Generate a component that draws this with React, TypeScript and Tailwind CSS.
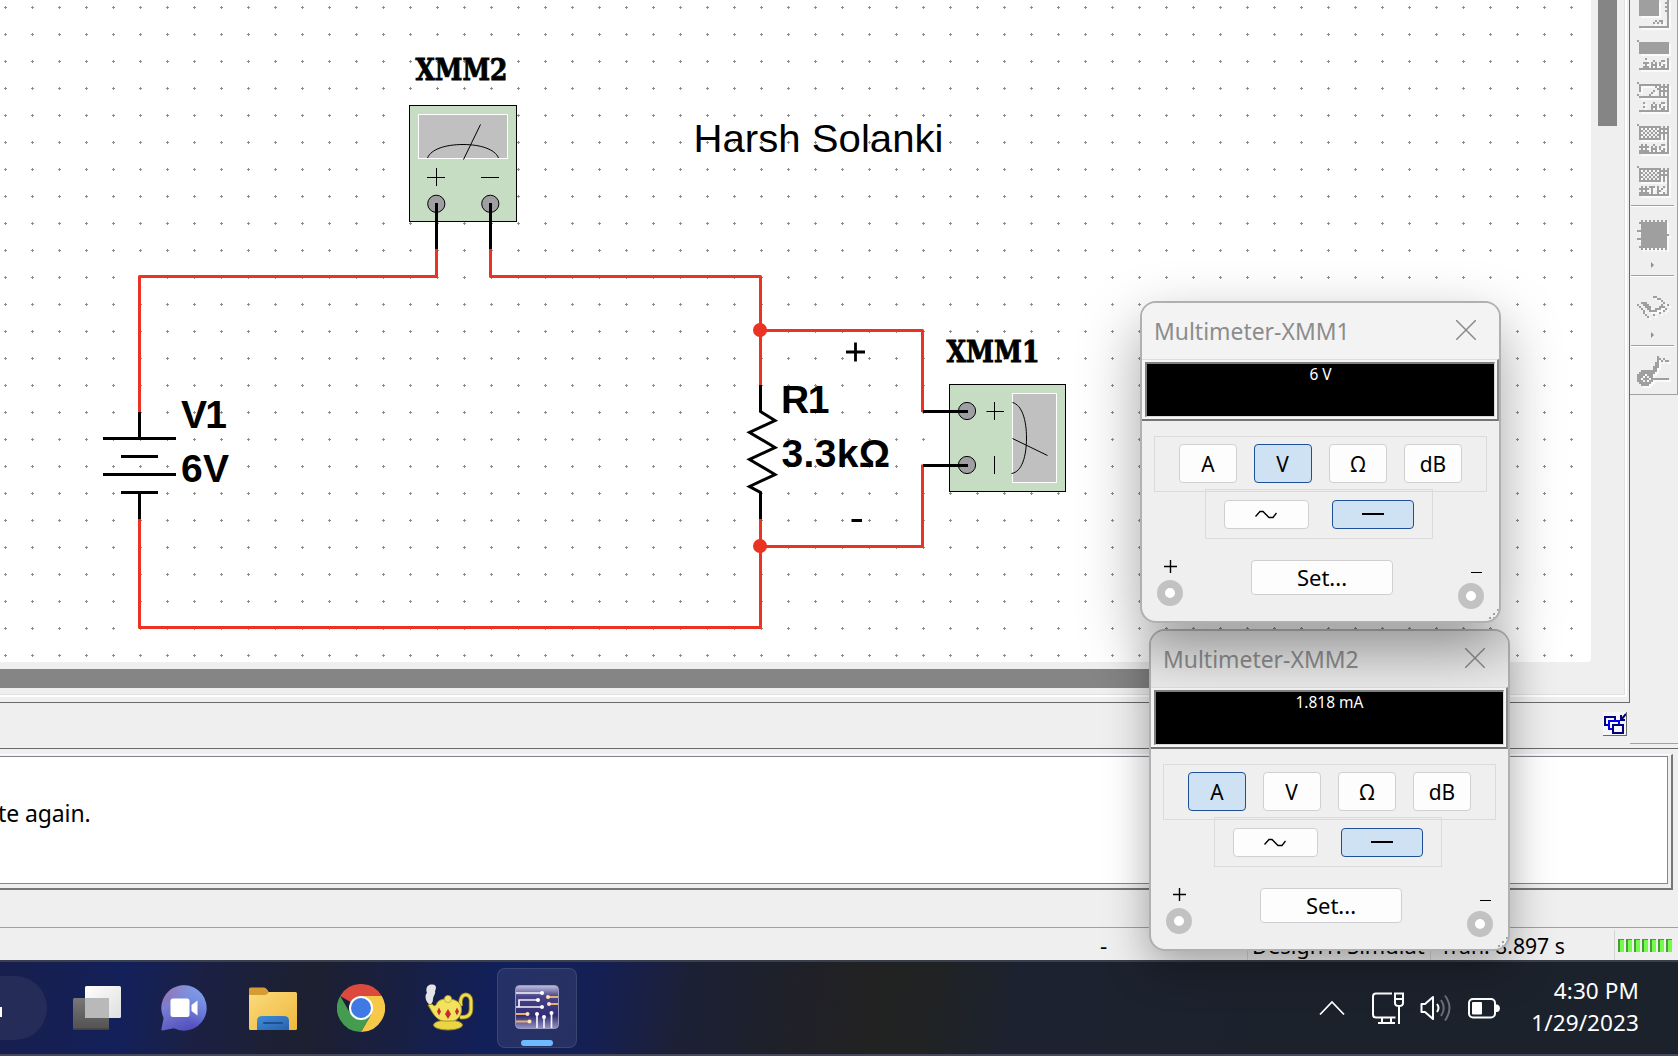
import React from "react";

const RED = "#ea3323";

/* ---------- Schematic ---------- */

function Schematic() {
  return (
    <svg width="1591" height="662" viewBox="0 0 1591 662" className="block rounded-br-sm bg-white">
      <defs>
        <pattern id="grid" x="4" y="6" width="27" height="27" patternUnits="userSpaceOnUse">
          <path d="M0 1h3v1H0zM1 0h1v3H1z" fill="#8f8f8f" shapeRendering="crispEdges" />
        </pattern>
      </defs>
      <rect width="1591" height="662" fill="url(#grid)" />

      <g fill="none" stroke={RED} strokeWidth="3" strokeLinejoin="round">
        <path d="M436.5 248V276.5H139.5V413" />
        <path d="M490.5 248V276.5H760.5V386" />
        <path d="M139.5 518V627.5H760.5V518" />
        <path d="M760.5 330.5H922.5V412" />
        <path d="M760.5 546.5H922.5V464.5" />
      </g>
      <circle cx="760" cy="330" r="7" fill={RED} />
      <circle cx="760" cy="546" r="7" fill={RED} />

      <g fill="none" stroke="#000" strokeWidth="3">
        <path d="M139.5 412V438M103 438.5H176M121 456.5H158M103 474.5H176M121 492.5H158M139.5 492V519" />
        <path d="M760.5 385V411.5L775 420.5L749.5 432.5L775 447.5L749.5 459.5L775 474.5L749.5 486.5L760.5 492.5V519" />
      </g>

      <g fill="none" stroke="#000">
        <rect x="409.5" y="105.5" width="107" height="116" fill="#c6dcc3" />
        <rect x="418.5" y="114.5" width="89" height="44" fill="#c0c0c0" stroke="#fff" />
        <path d="M427.5 158C431 149 446 144.5 463 144.5S495 149 498.5 158M480.5 124.5L463.5 159.5" />
        <path d="M427 177.5H445M436.5 168V186M481 177.5H499" />
        <circle cx="436.3" cy="203.8" r="8.6" fill="#9f9fa3" />
        <circle cx="490.3" cy="203.8" r="8.6" fill="#9f9fa3" />
        <path d="M436.5 203V249M490.5 203V249" strokeWidth="3" />
      </g>
      <g fill="none" stroke="#000">
        <rect x="949.5" y="384.5" width="116" height="107" fill="#c6dcc3" />
        <rect x="1012.5" y="393.5" width="44" height="89" fill="#c0c0c0" stroke="#fff" />
        <path d="M1012.5 402.5C1022 405 1026.5 420 1026.5 438S1022 472 1011.5 473.5M1012.5 438.5L1047.5 455.5" />
        <path d="M986.5 411.5H1004M994.5 402V420M994.5 456V474" />
        <circle cx="967" cy="411" r="8.6" fill="#9f9fa3" />
        <circle cx="967" cy="465" r="8.6" fill="#9f9fa3" />
        <path d="M923 411.5H968M923 465.5H968" strokeWidth="3" />
      </g>

      <g fontFamily="'DejaVu Serif', serif" fontWeight="700" fontSize="29" stroke="#000" strokeWidth="0.9">
        <text x="415.5" y="80" textLength="92" lengthAdjust="spacingAndGlyphs">XMM2</text>
        <text x="946.5" y="361.500" textLength="93" lengthAdjust="spacingAndGlyphs">XMM1</text>
      </g>
      <g fontFamily="'Liberation Sans', Arial, sans-serif" fontSize="39">
        <text x="693.5" y="152" textLength="250" lengthAdjust="spacingAndGlyphs">Harsh Solanki</text>
        <g fontWeight="700">
          <text x="181" y="428" textLength="46">V1</text>
          <text x="181" y="482" textLength="48">6V</text>
          <text x="781" y="413" textLength="48.5">R1</text>
          <text x="781.500" y="467" textLength="108.500">3.3kΩ</text>
        </g>
      </g>
      <path d="M846 352H865M855.5 342.5V361.5M851.5 520.5H862" stroke="#000" strokeWidth="2.8" />
    </svg>
  );
}

/* ---------- Instrument toolbar ---------- */

const FULL = ".###############";
const ICON_TOP = [
  "................",
  ".##########....#",
  ".##########...##",
  ".##########....#",
  ".##########...##",
  ".##########....#",
  ".##########...##",
  ".##########....#",
  ".##########....#",
  "...............#",
  "...............#",
  ".........#.##..#",
  "........#.#.#..#",
  "...............#",
  FULL,
];
const ICON_AG = [
  "#...............",
  FULL,
  FULL,
  FULL,
  FULL,
  FULL,
  FULL,
  "................",
  "................",
  "....#..........#",
  "........#...##.#",
  "...###.#.#.#...#",
  "....#..###.#.#.#",
  "...###.#.#..##.#",
  FULL,
];
const ICON_BODE = [
  "#...............",
  ".###########.#.#",
  ".#.......#.#####",
  ".#........##.#.#",
  ".#......#..#####",
  ".......#...#.#.#",
  "#.....#....#.#.#",
  ".###############",
  "...............#",
  "...............#",
  "...#....#...##.#",
  ".......#.#.#...#",
  "...#...###.#.#.#",
  ".......#.#..##.#",
  FULL,
];
const ICON_HASH = [
  "#...............",
  ".###########.#.#",
  ".#.#.#.#.#.#####",
  ".##.#.#.#.##.#.#",
  ".#.#.#.#.#.#####",
  ".##.#.#.#.##.#.#",
  ".#.#.#.#.#.#.#.#",
  ".###########.#.#",
  "...............#",
  "...............#",
  "..#.#...#...##.#",
  ".#####.#.#.#...#",
  "..#.#..###.#.#.#",
  ".#####.#.#..##.#",
  FULL,
];
const ICON_TK = [
  ...ICON_HASH.slice(0, 9),
  "...............#",
  "..#.#.###.#..#.#",
  ".#####.#..#.#..#",
  "..#.#..#..##...#",
  ".#####.#..#..#.#",
  FULL,
];
const CHIP_ROW = "..#############.";
const ICON_CHIP = [
  "..#.#.#.#.#.#.#.",
  ".##############.",
  CHIP_ROW, CHIP_ROW, CHIP_ROW,
  "###############.",
  CHIP_ROW,
  "..##############",
  CHIP_ROW,
  "###############.",
  CHIP_ROW, CHIP_ROW, CHIP_ROW,
  ".##############.",
  "..#.#.#.#.#.#.#.",
];
const ICON_HAND = [
  "........##......",
  "..........##....",
  "............#...",
  "..###........#..",
  "#..###......#..#",
  ".#..###....###..",
  "..#..##..###..#.",
  "...#..####...#..",
  "...#.......#....",
  "....#...#.......",
  ".....#..........",
];
const ICON_PROBE = [
  "..........#.....",
  "..........##.#..",
  "..........#.#.##",
  ".........##.....",
  ".........##.....",
  "........###.....",
  "........##......",
  "..########......",
  ".########.......",
  "####.###........",
  "###.#.##........",
  "##.###.#########",
  "###.#.##........",
  ".######.........",
  "..####..........",
];

function PixelIcon({ rows }: { rows: string[] }) {
  const cells: string[] = [];
  rows.forEach((r, y) =>
    r.split("").forEach((c, x) => {
      if (c === "#") cells.push(`M${x * 2} ${y * 2}h2v2h-2z`);
    })
  );
  const d = cells.join("");
  return (
    <svg width="34" height={rows.length * 2 + 2} className="block shrink-0" shapeRendering="crispEdges">
      <path d={d} fill="#fff" fillOpacity="0.7" transform="translate(2 2)" />
      <path d={d} fill="#9f9f9f" />
    </svg>
  );
}

function Separator() {
  return <div className="ml-px h-0.5 w-[43px] shrink-0 border-t border-[#a0a0a0] bg-white" />;
}

function Arrow() {
  return (
    <svg width="4" height="6" className="ml-[21px] block shrink-0">
      <path d="M0 0L3 3L0 6z" fill="#8f8f8f" />
    </svg>
  );
}

function Toolbar() {
  return (
    <div className="flex h-[744px] w-12 shrink-0 flex-col border-b border-[#a0a0a0]">
      <div className="flex h-[395px] flex-col overflow-hidden border-r border-b border-[#a0a0a0]">
        <div className="-mt-0.5 ml-[7px] flex flex-col gap-2.5">
          <PixelIcon rows={ICON_TOP} />
          <PixelIcon rows={ICON_AG} />
          <PixelIcon rows={ICON_BODE} />
          <PixelIcon rows={ICON_HASH} />
          <PixelIcon rows={ICON_TK} />
        </div>
        <div className="h-[7px] shrink-0" />
        <Separator />
        <div className="ml-[7px] pt-[13px]">
          <PixelIcon rows={ICON_CHIP} />
        </div>
        <div className="h-[10px] shrink-0" />
        <Arrow />
        <div className="h-[7px] shrink-0" />
        <Separator />
        <div className="ml-[7px] pt-[19px]">
          <PixelIcon rows={ICON_HAND} />
        </div>
        <div className="h-[12px] shrink-0" />
        <Arrow />
        <div className="h-[7px] shrink-0" />
        <Separator />
        <div className="ml-[7px] pt-[9px]">
          <PixelIcon rows={ICON_PROBE} />
        </div>
      </div>
    </div>
  );
}

/* ---------- Multimeter windows ---------- */

function MeterButton({ label, active }: { label: string; active: boolean }) {
  return (
    <button
      className={
        "flex h-[39px] w-[58px] items-center justify-center rounded border pb-0.5 text-[22px] leading-none text-black " +
        (active ? "border-[#1f4f95] bg-[#cfe2f4]" : "border-[#d0d0d0] bg-[#fdfdfd]")
      }
    >
      <span className="inline-block scale-x-95">{label}</span>
    </button>
  );
}

function Jack() {
  return <div className="size-[26px] rounded-full border-8 border-[#c2c2c2] bg-white" />;
}

type MeterProps = { title: string; value: string; mode: string; className: string; titleClass: string };

function Multimeter({ title, value, mode, className, titleClass }: MeterProps) {
  return (
    <div
      className={
        "absolute flex h-[322px] w-[361px] flex-col overflow-hidden rounded-2xl border-2 border-[#b0b0b0] bg-[#efefef] " +
        className
      }
    >
      <div className={"flex h-14 shrink-0 items-center justify-between pr-[23px] pl-3 " + titleClass}>
        <span className="inline-block origin-left scale-x-[0.955] text-[24px] leading-none whitespace-nowrap text-[#8c8c8c]">
          {title}
        </span>
        <svg width="20" height="20" className="block -translate-y-px">
          <path d="M0 0L20 20M20 0L0 20" stroke="#8a8a8a" strokeWidth="1.5" />
        </svg>
      </div>
      <div className="flex h-[62px] shrink-0 border-t border-r-2 border-b-2 border-t-[#dedede] border-r-[#8a8a8a] border-b-[#757575] bg-[#f6f6f6] pt-0.5 pr-0.5 pb-[2px] pl-[3px]">
        <div className="flex grow justify-center border-2 border-r border-b border-t-[#808080] border-r-[#d8d8d8] border-b-[#d8d8d8] border-l-[#808080] bg-black pt-[2px] text-[15.5px] leading-4 text-white">
          {value}
        </div>
      </div>
      <div className="ml-3 mt-[15px] flex h-14 w-[333px] shrink-0 items-start gap-[17px] border border-[#dbdbdb] pt-[7px] pl-6">
        {["A", "V", "Ω", "dB"].map((m) => (
          <MeterButton key={m} label={m} active={m === mode} />
        ))}
      </div>
      <div className="-mt-[3px] ml-[63px] flex h-[50px] w-[228px] shrink-0 items-start gap-[23px] border border-[#dbdbdb] pt-2.5 pl-[18px]">
        <button className="flex h-[29px] w-[85px] items-center justify-center rounded border border-[#d0d0d0] bg-[#fdfdfd]">
          <svg width="22" height="10" className="-translate-x-px">
            <path d="M0.5 6.5L5 1.5H8L14 7.5H18L21.5 3" fill="none" stroke="#000" strokeWidth="1.4" />
          </svg>
        </button>
        <button className="flex h-[29px] w-[82px] items-center justify-center rounded border border-[#1f4f95] bg-[#cfe2f4]">
          <span className="h-0.5 w-[22px] -translate-y-px bg-black" />
        </button>
      </div>
      <div className="flex grow items-start pt-[21px] pr-[15px] pl-[15px]">
        <div className="flex w-[26px] flex-col items-center">
          <svg width="13" height="13" className="ml-px">
            <path d="M0 6.5H13M6.5 0V13" stroke="#000" strokeWidth="1.4" />
          </svg>
          <div className="mt-[7px]">
            <Jack />
          </div>
        </div>
        <button className="ml-[68px] flex h-[35px] w-[142px] items-center justify-center rounded border border-[#cfcfcf] bg-[#fdfdfd] pb-0.5 text-[22px] leading-none text-black">
          Set...
        </button>
        <div className="ml-auto flex w-[26px] flex-col items-end pt-3">
          <div className="mr-0.5 h-px w-[11px] bg-black" />
          <div className="mt-2.5">
            <Jack />
          </div>
        </div>
      </div>
      <svg width="10" height="10" className="absolute right-0 bottom-0.5">
        <path d="M8 0h2v2H8zM8 4h2v2H8zM4 4h2v2H4zM8 8h1v2H8zM4 8h2v2H4zM0 8h2v2H0z" fill="#a0a0a0" />
      </svg>
    </div>
  );
}

/* ---------- Taskbar ---------- */

function TaskViewIcon() {
  return (
    <svg width="48" height="44" className="block">
      <defs>
        <linearGradient id="tvw" x1="0" y1="0" x2="1" y2="1">
          <stop offset="0" stopColor="#fff" />
          <stop offset="1" stopColor="#dedede" />
        </linearGradient>
        <linearGradient id="tvg" x1="0" y1="0" x2="0" y2="1">
          <stop offset="0" stopColor="#777" />
          <stop offset="1" stopColor="#515151" />
        </linearGradient>
      </defs>
      <rect x="0" y="12" width="36" height="32" rx="1.5" fill="url(#tvg)" />
      <rect x="12" y="0" width="36" height="32" rx="1.5" fill="url(#tvw)" />
      <rect x="12" y="12" width="24" height="20" fill="#b9b9b9" />
      <rect x="0" y="42.5" width="36" height="1.5" fill="#3f3f3f" />
    </svg>
  );
}

function ChatIcon() {
  const bubble = "M23 0.3a22.5 22.7 0 1 1-10 43L1.5 45.6Q0 45.6 0.4 44L2.6 33A22.5 22.7 0 0 1 23 .3z";
  return (
    <svg width="46" height="46" className="block">
      <defs>
        <linearGradient id="chat" x1="0.1" y1="0.1" x2="0.5" y2="1">
          <stop offset="0" stopColor="#9c6da8" />
          <stop offset="0.35" stopColor="#7b7fd0" />
          <stop offset="1" stopColor="#5450c0" />
        </linearGradient>
        <linearGradient id="chat2" x1="1" y1="0" x2="0.4" y2="0.6">
          <stop offset="0" stopColor="#7ba4f0" />
          <stop offset="1" stopColor="#7ba4f0" stopOpacity="0" />
        </linearGradient>
      </defs>
      <path d={bubble} fill="url(#chat)" />
      <path d={bubble} fill="url(#chat2)" />
      <rect x="9.500" y="13.500" width="19" height="18.500" rx="2.500" fill="#fff" />
      <path d="M30.500 20L36.500 15.500V30.500L30.500 26z" fill="#fff" />
    </svg>
  );
}

function FolderIcon() {
  return (
    <svg width="48" height="43" className="block">
      <defs>
        <linearGradient id="fold" x1="0" y1="0" x2="1" y2="1">
          <stop offset="0" stopColor="#fbdb7c" />
          <stop offset="1" stopColor="#eeb73d" />
        </linearGradient>
        <linearGradient id="foldb" x1="0" y1="0" x2="1" y2="1">
          <stop offset="0" stopColor="#3d90d6" />
          <stop offset="1" stopColor="#2a5fae" />
        </linearGradient>
      </defs>
      <path d="M0 2Q0 .5 1.5 .5H15Q17 .5 18.5 3L21 7V14H0z" fill="#d59c33" />
      <path d="M0 8H17L20 5H46.5Q48 5 48 6.5V41.5Q48 43 46.5 43H1.5Q0 43 0 41.5z" fill="url(#fold)" />
      <path d="M8 43V34Q8 29 13 29H35Q40 29 40 34V43z" fill="url(#foldb)" />
      <rect x="14" y="35" width="20" height="2" rx="1" fill="#1f4f92" />
    </svg>
  );
}

function ChromeIcon() {
  return (
    <svg width="48" height="48" viewBox="0 0 48 48" className="block">
      <path d="M24 24L3.200 12A24 24 0 0 1 44.800 12z" fill="#db4a3c" />
      <path d="M24 12H44.800A24 24 0 0 1 24 48L34.400 30z" fill="#f7c948" />
      <path d="M13.600 30L3.200 12A24 24 0 0 0 24 48L34.400 30z" fill="#459c50" />
      <circle cx="24" cy="24" r="12" fill="#fff" />
      <circle cx="24" cy="24" r="10" fill="#4079e4" />
    </svg>
  );
}

function TeapotIcon() {
  return (
    <svg width="49" height="47" viewBox="0 0 49 47" className="block">
      <path d="M4 20C1 18 -1 12 2 9C0 4 3 0 7 .5C11 0 12 4 10 7C11 10 8 12 8 15C8 19 6 21 4 20z" fill="#e4e4e8" />
      <path d="M36 22C33 8 46 8 46 17V25C46 32 41 34 35 33" fill="none" stroke="#8a7a1c" strokeWidth="4.500" />
      <path d="M36 22C33 8 46 8 46 17V25C46 32 41 34 35 33" fill="none" stroke="#f0dc50" strokeWidth="2.800" />
      <ellipse cx="23" cy="41" rx="14.500" ry="5" fill="#ecd545" stroke="#9c8a22" />
      <path d="M3 21L7 20C9 23 11 22 12 19C15 13 33 13 36 22C38 31 33 36 28 37H18C10 35 8 29 3 21z" fill="#f3e25d" stroke="#a39126" />
      <circle cx="23" cy="15" r="3.600" fill="#f5e463" stroke="#b29f30" strokeWidth=".7" />
      <path d="M23 25L26 30L23 35L20 30zM14 23.500L16 27.500L14 31.500L12 27.500zM32 23.500L34 27.500L32 31.500L30 27.500z" fill="#c42c30" />
    </svg>
  );
}

function CircuitIcon() {
  return (
    <svg width="44" height="44" viewBox="0 0 44 44" className="block">
      <defs>
        <linearGradient id="circ" x1="0" y1="0" x2="0" y2="1">
          <stop offset="0" stopColor="#c0c0df" />
          <stop offset=".25" stopColor="#494487" />
          <stop offset=".7" stopColor="#312c74" />
          <stop offset="1" stopColor="#9493c3" />
        </linearGradient>
      </defs>
      <rect x=".5" y=".5" width="43" height="43" rx="4" fill="url(#circ)" stroke="#9a9ac0" />
      <path
        d="M1 8H27M4 22V15H23M1 22H27M22 43V29M29 43V32M36.500 43V28"
        fill="none"
        stroke="#f2f2fb"
        strokeWidth="1.700"
      />
      <g fill="#fff">
        <circle cx="27" cy="8" r="2" />
        <circle cx="23" cy="15" r="2" />
        <circle cx="27" cy="22" r="2" />
        <circle cx="22" cy="29" r="2" />
        <circle cx="29" cy="32" r="2" />
        <circle cx="36.500" cy="28" r="2" />
      </g>
      <path d="M33 12H43M34 19H43M1 29H12M1 36.500H14" stroke="#e7b06a" strokeWidth="1.800" />
      <g fill="#fbe3bd">
        <circle cx="33" cy="12" r="2" />
        <circle cx="34" cy="19" r="2" />
        <circle cx="12.500" cy="29" r="2" />
        <circle cx="14.500" cy="36.500" r="2" />
      </g>
    </svg>
  );
}

function Taskbar() {
  return (
    <div className="flex h-24 items-center border-t-2 border-b-2 border-t-[#3a3f4e] border-b-[#45475a] bg-[linear-gradient(100deg,#181f4d_0px,#13205a_130px,#1b2044_200px,#1d2030_310px,#181f42_400px,#12205a_490px,#151f54_590px,#1c2036_680px,#1f2029_780px,#222222_870px,#202224_930px,#1c2230_1010px,#1c222c_1300px)]">
      <div className="h-16 w-[47px] rounded-r-full bg-[#262c58] pt-[31px]">
        <div className="h-2.5 w-0.5 bg-white" />
      </div>
      <div className="ml-[26px]">
        <TaskViewIcon />
      </div>
      <div className="ml-10">
        <ChatIcon />
      </div>
      <div className="ml-[42px] pt-px">
        <FolderIcon />
      </div>
      <div className="ml-10">
        <ChromeIcon />
      </div>
      <div className="ml-10 -translate-y-px">
        <TeapotIcon />
      </div>
      <div className="ml-[23px] flex h-20 w-20 flex-col items-center rounded-lg border border-white/10 bg-white/8 pt-4">
        <CircuitIcon />
        <div className="mt-[11px] h-1.5 w-8 rounded-full bg-[#6dbaff]" />
      </div>

      <div className="mr-[39px] ml-auto flex items-center text-white">
        <svg width="26" height="16" className="block">
          <path d="M1 14.500L13 2L25 14.500" fill="none" stroke="#fff" strokeWidth="1.800" />
        </svg>
        <svg width="33" height="33" className="ml-[27px] block" fill="none" stroke="#fff" strokeWidth="2">
          <path d="M20 1.500H4Q1 1.500 1 4.500V22.500Q1 25.500 4 25.500H23.500M10 26V31M19 26V31M6 31H23M27 15V32" />
          <path d="M23 1.500H31V11Q31 14 27 14T23 11zM23 7H31" />
        </svg>
        <svg width="33" height="30" className="ml-[15px] block" fill="none" stroke="#fff" strokeWidth="2">
          <path d="M1.500 11V19H5L13 26V4L5 11z" strokeLinejoin="round" />
          <path d="M17 11Q20 15 17 19" />
          <path d="M21 7Q26.500 15 21 23M25 2.500Q34 15 25 27.500" stroke="#6a6e76" />
        </svg>
        <svg width="33" height="21" className="ml-[15px] block">
          <rect x="1" y="1" width="26" height="18.500" rx="4" fill="none" stroke="#fff" strokeWidth="2" />
          <rect x="4" y="4" width="10" height="12.500" rx="1" fill="#fff" />
          <path d="M27 6.500H29.500Q32 7.500 32 10.200T29.500 14H27z" fill="#fff" />
        </svg>
        <div className="ml-[26px] w-28 -translate-y-px text-right text-[22.5px] leading-8 tracking-[0.1px] whitespace-nowrap">
          <div>4:30 PM</div>
          <div>1/29/2023</div>
        </div>
      </div>
    </div>
  );
}

/* ---------- Page ---------- */

function CascadeIcon() {
  return (
    <svg width="24" height="24" className="block border-r border-b border-[#696969] bg-[#f6f6f6]" fill="none" strokeWidth="2">
      <rect x="2" y="5" width="10" height="8" stroke="#000080" />
      <rect x="6" y="9" width="10" height="8" stroke="#0000ff" fill="#f6f6f6" />
      <rect x="10" y="13" width="10" height="8" stroke="#000080" fill="#f6f6f6" />
      <path d="M18 3V8H22M23 2L18 8" stroke="#000080" />
    </svg>
  );
}

export default function App() {
  return (
    <div className="relative flex h-[1056px] w-[1678px] flex-col overflow-hidden bg-[#efefef] font-['Noto_Sans','Open_Sans',sans-serif] text-black">
      <div className="flex">
        <div className="w-[1630px]">
          <div className="h-[703px] border-r border-b border-[#696969] pr-0.5 pb-[5px]">
            <div className="h-[697px] w-[1627px] border-r-2 border-b-2 border-white">
              <div className="h-[695px] w-[1625px] border-r border-b border-[#e0e0e0]">
                <div className="flex">
                  <Schematic />
                  <div className="ml-[7px] h-[126px] w-[19px] bg-[#858585]" />
                </div>
                <div className="mt-[7px] h-[19px] w-[1300px] bg-[#858585]" />
              </div>
            </div>
          </div>
          <div className="flex justify-end pt-[9px] pr-[3px]">
            <CascadeIcon />
          </div>
        </div>
        <Toolbar />
      </div>
      <div className="h-[5px] border-b border-[#696969]" />
      <div className="mt-[5px] h-[136px] w-[1673px] border-t border-r-2 border-b-2 border-t-white border-r-[#777] border-b-[#777] pr-[3px] pb-[4px]">
        <div className="mt-px h-[128px] border-t border-r border-b border-[#828790] bg-white pt-[40px] text-[23px] leading-[32px]">
          <div className="-ml-0.5 tracking-[-0.1px] whitespace-nowrap">te again.</div>
        </div>
      </div>
      <div className="mt-[37px] flex h-[33px] items-stretch border-t border-[#a0a0a0] pt-[2px] text-[22.5px] leading-[32px] whitespace-nowrap">
        <div className="w-[1247px] pl-[1100px]">-</div>
        <div className="w-[183px] border-l border-[#d5d5d5] pl-[4px]">
          <span className="inline-block origin-left scale-x-[0.97]">Design1: Simulat</span>
        </div>
        <div className="w-[184px] border-l border-[#d5d5d5] pl-[9px]">
          <span className="inline-block origin-left scale-x-[0.94]">Tran: 8.897 s</span>
        </div>
        <div className="flex h-[30px] grow items-center gap-0.5 border-l border-[#d5d5d5] pl-[3px]">
          {[0, 1, 2, 3, 4, 5, 6].map((i) => (
            <div key={i} className="h-[13px] w-1.5 border-t border-l-2 border-[#4b9a3a] bg-[#75fb4c]" />
          ))}
        </div>
      </div>
      <Taskbar />

      <Multimeter
        title="Multimeter-XMM2"
        value="1.818 mA"
        mode="A"
        className="top-[629px] left-[1149px] shadow-[0_14px_44px_rgba(0,0,0,0.34)]"
        titleClass="bg-[linear-gradient(180deg,#dedede,#ebebeb)]"
      />
      <Multimeter
        title="Multimeter-XMM1"
        value="6 V"
        mode="V"
        className="top-[301px] left-[1140px] shadow-[0_24px_60px_rgba(0,0,0,0.36)]"
        titleClass="bg-[#f3f3f3]"
      />
    </div>
  );
}
